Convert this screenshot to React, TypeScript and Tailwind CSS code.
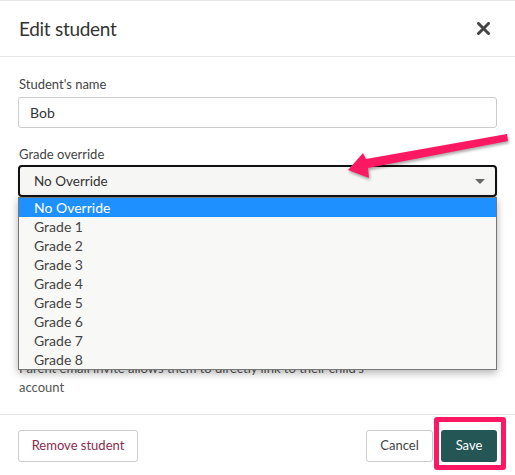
import { JSX } from "react";

const grades = [
  "No Override",
  "Grade 1",
  "Grade 2",
  "Grade 3",
  "Grade 4",
  "Grade 5",
  "Grade 6",
  "Grade 7",
  "Grade 8",
];

// fields hidden behind the open list
const HiddenField = (): JSX.Element => (
  <div className="mt-[39px] h-[31px] rounded-[3px] border border-[#ccc]" />
);

const App = (): JSX.Element => {
  return (
    <div
      className="relative h-[475px] w-[515px] overflow-hidden border-t border-[#e6e6e6] bg-white"
      style={{ fontFamily: 'Lato, "Open Sans", sans-serif' }}
    >
      <header className="flex h-[56px] items-center justify-between border-b border-[#e6e6e6] pl-[19px] pr-[25px]">
        <h1 className="pt-px text-[19px] leading-[28px] tracking-[-0.3px] text-[#333]">Edit student</h1>
        <svg width="13" height="13" viewBox="0 0 13 13" className="text-[#444]">
          <path d="M1.5 1.5 L11.5 11.5 M11.5 1.5 L1.5 11.5" stroke="currentColor" strokeWidth="3" strokeLinecap="round" />
        </svg>
      </header>

      <main className="px-[18px] pb-[17px] pt-[18px]">
        <p className="pl-px text-[13px] leading-[19px] text-[#444]">Student's name</p>
        <div className="mt-[3px] h-[31px] rounded-[3px] border border-[#ccc] px-[11px] text-[14px] leading-[29px] text-[#333]">
          Bob
        </div>

        <p className="mt-[17px] pl-px text-[13px] leading-[19px] text-[#444]">Grade override</p>
        <div className="relative mt-px">
          <div className="flex h-[32px] items-center justify-between rounded-[4px] border-2 border-[#111] bg-[#f6f6f4] pl-[14px] pr-[10px] text-[13.5px] text-[#333] shadow-[0_1px_2px_rgba(0,0,0,0.15)]">
            <span>No Override</span>
            <svg width="10" height="5" viewBox="0 0 10 5">
              <path d="M0 0 L10 0 L5 5 Z" fill="#666" />
            </svg>
          </div>

          <ul className="absolute left-0 right-0 top-[32px] z-10 border border-[#777] bg-[#f8f8f6] shadow-[0_3px_8px_rgba(0,0,0,0.3)]">
            {grades.map((g, i) => (
              <li
                key={g}
                className={
                  i === 0
                    ? "h-[19px] bg-[#1e90ff] pl-[15px] text-[14px] leading-[19px] text-white"
                    : "h-[19px] pl-[15px] text-[14px] leading-[19px] text-[#444]"
                }
              >
                {g}
              </li>
            ))}
          </ul>
        </div>

        <HiddenField />
        <HiddenField />

        <p className="mt-[22px] w-[352px] pl-px text-[13px] leading-[19px] text-[#555]">
          Parent email invite allows them to directly link to their child's account
        </p>
      </main>

      <footer className="flex items-center justify-between border-t border-[#e6e6e6] px-[18px] pt-[15px]">
        <button className="h-[32px] w-[120px] rounded-[3px] border border-[#ccc] bg-white text-[13px] text-[#8b2c4e]">
          Remove student
        </button>
        <div className="flex gap-[8px]">
          <button className="h-[32px] w-[67px] rounded-[3px] border border-[#ccc] bg-white text-[13px] text-[#444]">
            Cancel
          </button>
          <div className="relative">
            <button className="h-[32px] w-[56px] rounded-[3px] bg-[#235654] text-[13px] text-white">
              Save
            </button>
            <div className="pointer-events-none absolute -bottom-[8px] -left-[7px] -right-[9px] -top-[13px] rounded-[3px] border-[5px] border-[#fc1862]" />
          </div>
        </div>
      </footer>

      <svg
        className="pointer-events-none absolute left-0 top-0 z-20"
        width="515"
        height="475"
        viewBox="0 0 515 475"
        style={{ filter: "drop-shadow(1px 2px 1.5px rgba(0,0,0,0.35))" }}
      >
        <polygon
          points="507,133 366,158 363,152 348,169 369,177 368,167 508,140"
          fill="#fc1862"
        />
      </svg>
    </div>
  );
};

export default App;
